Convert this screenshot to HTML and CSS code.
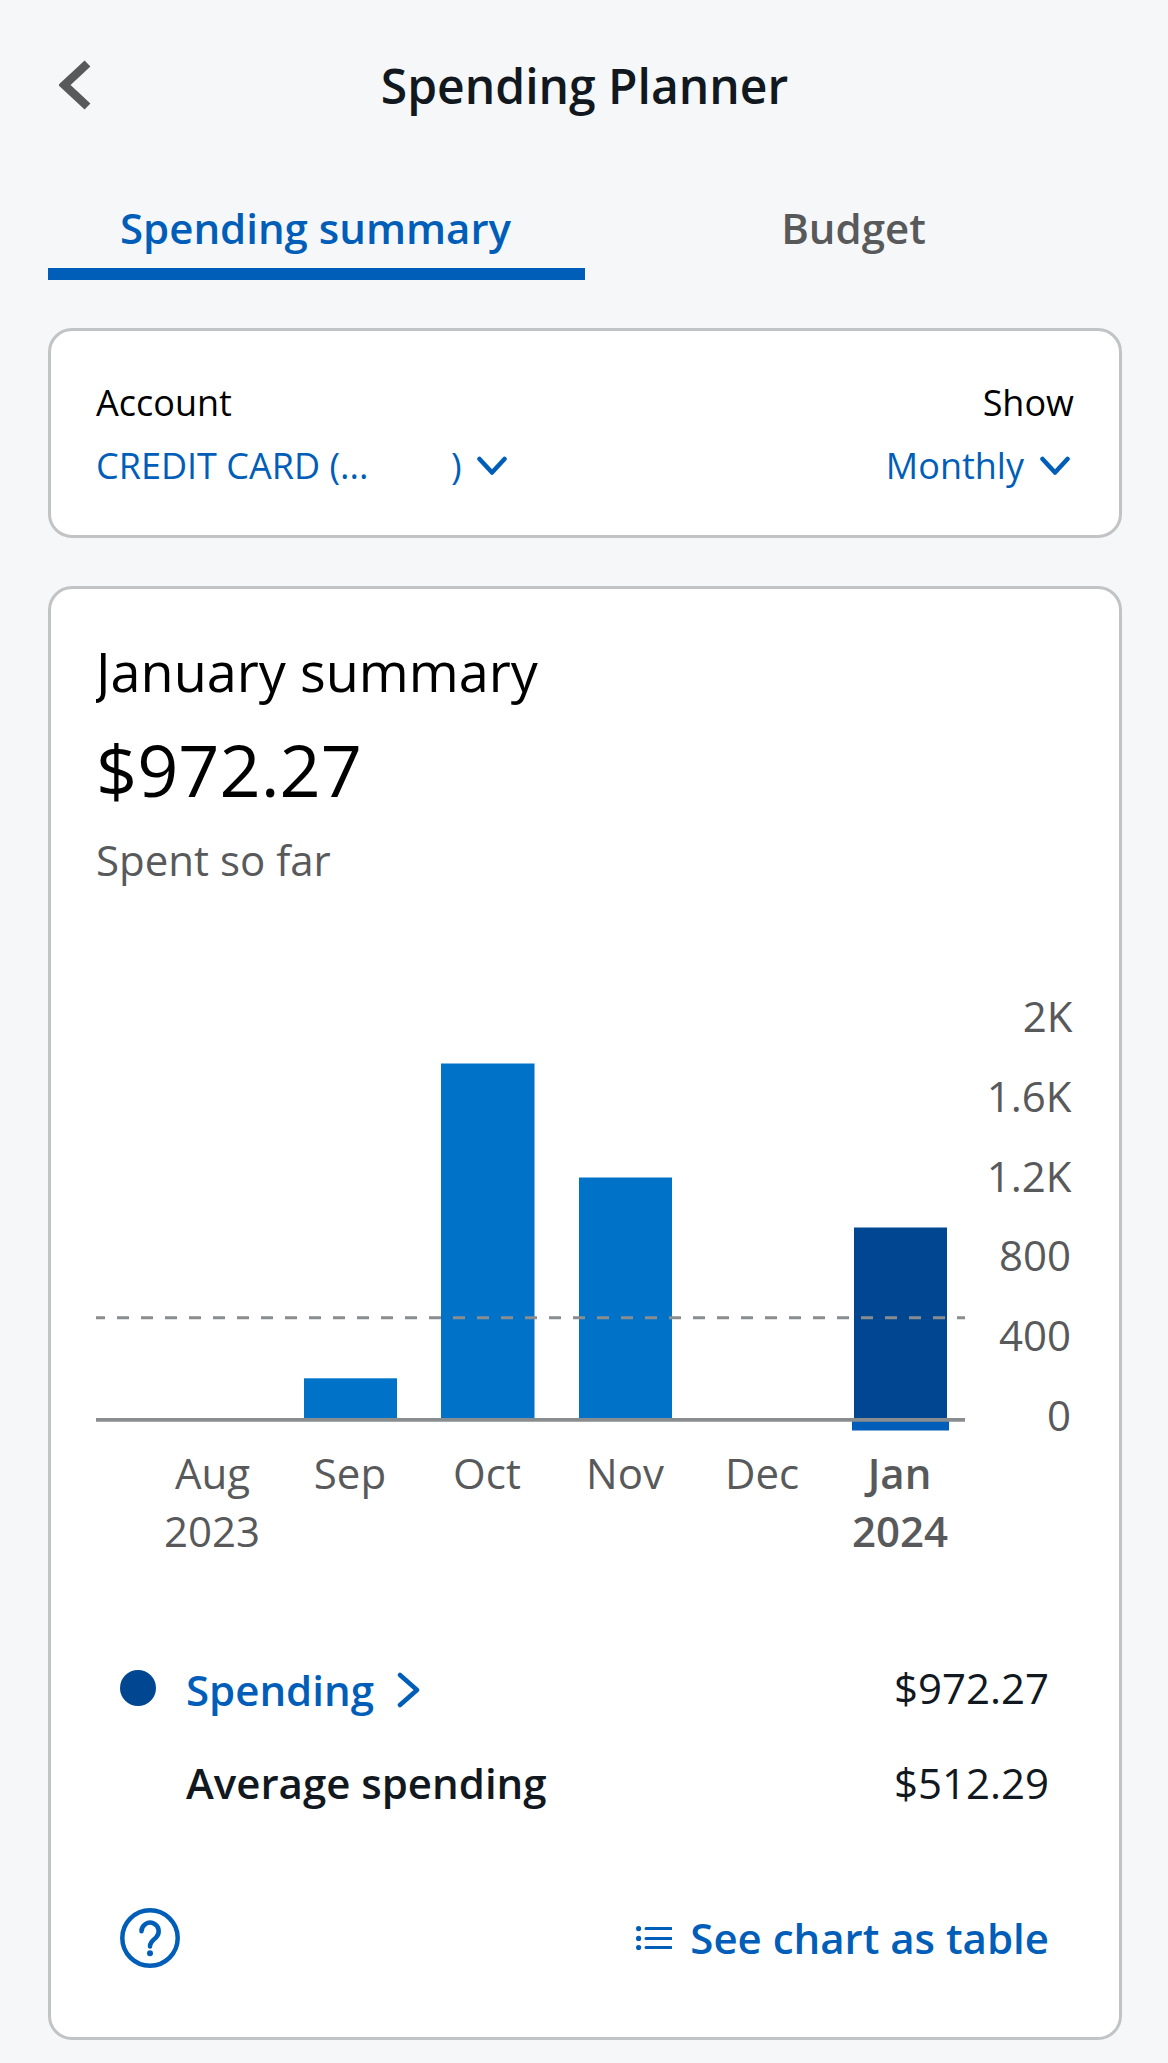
FILE: index.html
```html
<!DOCTYPE html>
<html lang="en">
<head>
<meta charset="utf-8">
<title>Spending Planner</title>
<link rel="stylesheet" href="styles.css">
</head>
<body>
<header class="header">
  <svg class="back" viewBox="0 0 32 50" width="32" height="50"><path d="M28.500 3.500L5.500 25L28.500 46.500" fill="none" stroke="#58595b" stroke-width="8.500"/></svg>
  <h1 class="title">Spending Planner</h1>
</header>
<nav class="tabs">
  <a class="tab tab-active">Spending summary</a>
  <a class="tab">Budget</a>
</nav>
<section class="card filters">
  <div class="filter">
    <span class="filter-label">Account</span>
    <span class="filter-value"><span class="account-name">CREDIT CARD (...</span><span>)</span>
      <svg class="chev" viewBox="0 0 30 20" width="30" height="20"><path d="M2.500 3L15 16.500L27.500 3" /></svg></span>
  </div>
  <div class="filter filter-right">
    <span class="filter-label">Show</span>
    <span class="filter-value"><span>Monthly</span>
      <svg class="chev" viewBox="0 0 30 20" width="30" height="20"><path d="M2.500 3L15 16.500L27.500 3" /></svg></span>
  </div>
</section>
<section class="card summary">
  <h2 class="month">January summary</h2>
  <div class="total">$972.27</div>
  <div class="caption">Spent so far</div>
  <svg class="chart" viewBox="96 980 976 600" width="976" height="600">
    <g class="bars">
      <rect x="304" y="1378.300" width="93" height="42"/>
      <rect x="441" y="1063.500" width="93.500" height="356"/>
      <rect x="579" y="1177.500" width="93" height="242"/>
      <rect class="bar-current" x="854" y="1227.500" width="93" height="192"/>
      <rect class="bar-mark" x="852" y="1421" width="97" height="9.500"/>
    </g>
    <path class="axis" d="M96 1419.800H965"/>
    <path class="average" d="M96 1317.700H965"/>
    <g class="ticks">
      <text x="1072.500" y="1032">2K</text>
      <text x="1071.500" y="1112">1.6K</text>
      <text x="1071.500" y="1192">1.2K</text>
      <text x="1071" y="1271">800</text>
      <text x="1071" y="1351">400</text>
      <text x="1071" y="1431">0</text>
    </g>
    <g class="months">
      <text x="212.500" y="1489">Aug</text>
      <text x="212" y="1547">2023</text>
      <text x="350" y="1489">Sep</text>
      <text x="487" y="1489">Oct</text>
      <text x="625" y="1489">Nov</text>
      <text x="762" y="1489">Dec</text>
      <text class="now" x="899.500" y="1489">Jan</text>
      <text class="now" x="900" y="1547">2024</text>
    </g>
  </svg>
  <div class="legend">
    <div class="row">
      <span class="dot"></span>
      <a class="row-link">Spending
        <svg class="next" viewBox="0 0 24 36" width="24" height="36"><path d="M3 3L20 18L3 33"/></svg></a>
      <span class="value">$972.27</span>
    </div>
    <div class="row">
      <span></span>
      <span class="row-name">Average spending</span>
      <span class="value">$512.29</span>
    </div>
  </div>
  <footer class="actions">
    <svg class="help" viewBox="0 0 60 60" width="60" height="60"><circle cx="30" cy="30" r="27.700"/><path d="M21.500 23.200A8.600 8.600 0 1 1 36 29.500C32.500 32.600 30 34.500 30 38.500"/><circle class="help-dot" cx="30" cy="45.300" r="3"/></svg>
    <a class="table-link"><svg class="list" viewBox="0 0 36 24" width="36" height="24"><path d="M10 2.600H35M10 12.400H35M10 21.600H35"/><circle cx="2.600" cy="2.600" r="2.600"/><circle cx="2.600" cy="12.400" r="2.600"/><circle cx="2.600" cy="21.600" r="2.600"/></svg><span class="table-text">See chart as table</span></a>
  </footer>
</section>
</body>
</html>
```
FILE: styles.css
```css
* { box-sizing: border-box; }
body {
  margin: 0;
  min-height: 2063px;
  padding: 0 46px 23px 48px;
  background: #f6f7f9;
  font-family: "Open Sans", "Noto Sans", sans-serif;
  color: #000;
  white-space: nowrap;
}
.header {
  display: grid;
  grid-template-columns: 48px 1fr 48px;
  align-items: center;
  height: 170px;
  padding: 0 12px 0 11px;
}
.title { margin: 0; text-align: center; font-size: 48px; font-weight: 600; color: #111820; }
.tabs { display: grid; grid-template-columns: 1fr 1fr; margin-top: 17px; }
.tab {
  display: flex;
  align-items: center;
  justify-content: center;
  height: 93px;
  border-bottom: 12px solid transparent;
  font-size: 42px;
  font-weight: 600;
  color: #58595b;
}
.tab-active { padding-right: 2px; color: #005eb8; border-bottom-color: #005eb8; }
.card { border: 3px solid #c1c3c4; border-radius: 24px; background: #fff; }
.filters {
  display: flex;
  justify-content: space-between;
  height: 210px;
  margin-top: 48px;
  padding: 48px 45px 0;
  font-size: 36px;
  line-height: 48px;
}
.filter { display: flex; flex-direction: column; gap: 15px; }
.filter-right { align-items: flex-end; }
.filter-value { display: flex; align-items: center; color: #005eb8; }
.account-name { width: 355px; }
.chev { margin-left: 15px; }
.filter-right .chev { margin-left: 16px; margin-right: 4px; }
.chev path, .next path { fill: none; stroke: #005eb8; stroke-width: 4.500; stroke-linecap: round; stroke-linejoin: round; }
.summary { height: 1454px; margin-top: 48px; padding: 46px 47px 0 45px; }
.month { margin: 0; overflow: hidden; font-size: 54px; font-weight: 400; line-height: 72px; }
.total { margin-top: 14px; font-size: 72px; line-height: 96px; }
.caption { margin-top: 14px; font-size: 42px; line-height: 58px; color: #58595b; }
.chart { display: block; margin-top: 91px; overflow: visible; }
.bars { fill: #0073c8; }
.bar-current { fill: #004691; }
.bar-mark { fill: #005eb8; }
.axis { stroke: #8a8d8f; stroke-width: 3.700; }
.average { stroke: #8a8d8f; stroke-width: 3; stroke-dasharray: 12 12; stroke-dashoffset: 3; }
.ticks, .months { font-size: 42px; fill: #58595b; }
.ticks { text-anchor: end; }
.months { text-anchor: middle; }
.now { font-weight: 600; }
.legend { display: flex; flex-direction: column; gap: 37px; margin-top: 79px; padding: 0 23px 0 24px; font-size: 42px; line-height: 58px; color: #111820; }
.row { display: grid; grid-template-columns: 66px 1fr auto; grid-template-rows: 58px; align-items: center; }
.dot { width: 36px; height: 36px; border-radius: 50%; background: #004691; }
.row-link { display: flex; align-items: center; gap: 23px; padding-top: 3px; font-weight: 600; color: #005eb8; }
.row-name { font-weight: 600; }
.actions { display: flex; align-items: center; justify-content: space-between; height: 60px; margin-top: 96px; padding: 0 23px 0 24px; }
.help circle, .help path { fill: none; stroke: #005eb8; stroke-width: 4.500; stroke-linecap: round; }
.help .help-dot { fill: #005eb8; stroke: none; }
.table-link { display: flex; align-items: center; gap: 18px; font-size: 42px; font-weight: 600; color: #005eb8; }
.table-text { padding-bottom: 2px; }
.list path { stroke: #005eb8; stroke-width: 3; stroke-linecap: round; }
.list circle { fill: #005eb8; }
```
